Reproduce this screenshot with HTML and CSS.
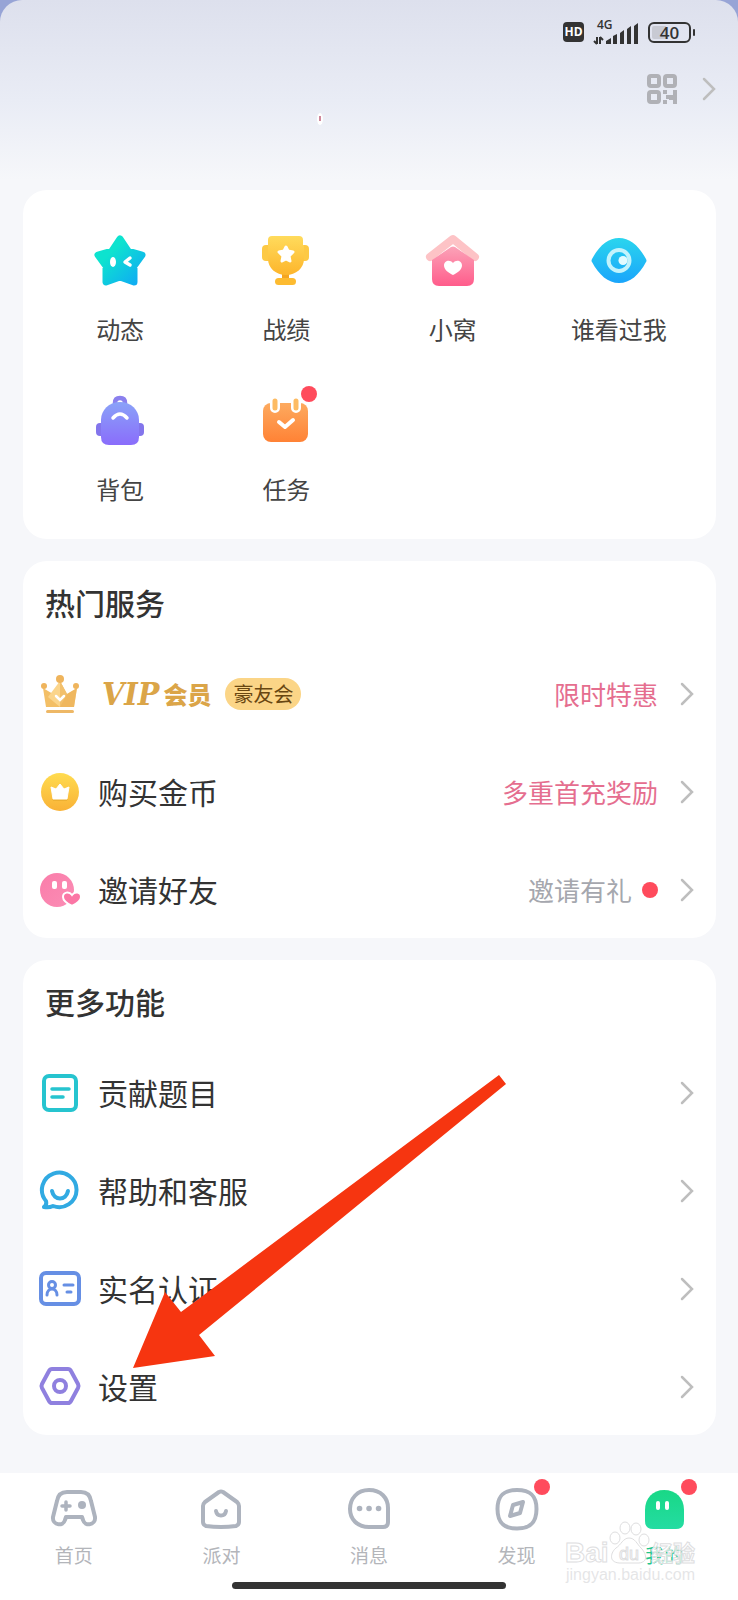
FILE: index.html
```html
<!DOCTYPE html>
<html lang="zh-CN">

<head>
    <meta charset="UTF-8">
    <meta name="viewport" content="width=device-width, initial-scale=1.0">
    <title>我的</title>
    <link rel="stylesheet" href="styles.css">
</head>

<body>
    <div class="page">
        <header class="top">
            <div class="status-bar">
                <span class="hd">HD</span>
                <svg class="signal" width="46" height="36" viewBox="0 -5 46 36">
                    <text class="signal-text" x="5" y="10">4G</text>
                    <path d="M5 18v7M5 25l-3-3M8 25v-7M8 18l3 3" fill="none" stroke="#333" stroke-width="2" />
                    <path d="M14 25v-3l5-3v6zM21 25v-8l4-2v10zM28 25V14l4-3v14zM35 25V10l4-3v18zM42 25V7l4-3v21z" fill="#333" />
                </svg>
                <span class="battery">40</span>
            </div>
            <div class="profile">
                <svg class="mark" width="10" height="14" viewBox="0 0 10 14">
                    <ellipse cx="6" cy="7" rx="3" ry="6" fill="#fff" />
                    <path d="M6 4v5" stroke="#c0607a" stroke-width="1.500" />
                </svg>
                <button type="button" class="qr-button" aria-label="二维码">
                    <svg width="32" height="32" viewBox="0 0 32 32" fill="none" stroke="#b0b1b6" stroke-width="4">
                        <rect x="3" y="3" width="10" height="10" rx="2" />
                        <rect x="19" y="3" width="10" height="10" rx="2" />
                        <rect x="3" y="19" width="10" height="10" rx="2" />
                        <path d="M17 19h4M20 24h8M17 29h4M29 17v14M25 22v5" />
                    </svg>
                </button>
                <a href="#profile" aria-label="个人主页">
                    <svg class="chevron" width="14" height="24" viewBox="0 0 14 24"><path d="M2 2l10 10L2 22" /></svg>
                </a>
            </div>
        </header>

        <main>
            <section class="card grid">
                <a class="tile" href="#moments">
                    <svg width="56" height="56" viewBox="0 0 56 56">
                        <defs>
                            <linearGradient id="star" x1="0" y1="0" x2="1" y2="1">
                                <stop offset="0.3" stop-color="#0de3cf" />
                                <stop offset="1" stop-color="#0fa9f5" />
                            </linearGradient>
                        </defs>
                        <path d="M28 6L36 18L50 22L42 33L42 49L28 44L14 49L14 33L6 22L20 18z" fill="url(#star)" stroke="url(#star)" stroke-width="7" stroke-linejoin="round" />
                        <ellipse cx="21" cy="29" rx="3" ry="5" fill="#fff" />
                        <path d="M38 25l-5 4 5 3" fill="none" stroke="#fff" stroke-width="3.500" stroke-linecap="round" stroke-linejoin="round" />
                    </svg>
                    <span>动态</span>
                </a>
                <a class="tile" href="#records">
                    <svg width="56" height="56" viewBox="0 0 56 56">
                        <defs>
                            <linearGradient id="cup" x1="0" y1="0" x2="0" y2="1">
                                <stop offset="0" stop-color="#ffdb5c" />
                                <stop offset="1" stop-color="#fdb52b" />
                            </linearGradient>
                        </defs>
                        <rect x="4" y="12" width="47" height="16" rx="4" fill="#fdc944" />
                        <rect x="24" y="39" width="7" height="8" fill="#f5a51f" />
                        <path d="M14 3h27q4 0 4 4v5h1v14c0 9-8 16-18 16S10 35 10 26V7q0-4 4-4z" fill="url(#cup)" />
                        <rect x="17" y="45" width="21" height="7" rx="3.500" fill="#fdbb30" />
                        <path d="M28 14l2 4 5 1-4 4 1 5-4-2-4 2 1-5-4-4 5-1z" fill="#fff" stroke="#fff" stroke-width="3" stroke-linejoin="round" />
                    </svg>
                    <span>战绩</span>
                </a>
                <a class="tile" href="#nest">
                    <svg width="56" height="56" viewBox="0 0 56 56">
                        <defs>
                            <linearGradient id="house" x1="0" y1="0" x2="0" y2="1">
                                <stop offset="0" stop-color="#fba3b8" />
                                <stop offset="1" stop-color="#ff5c8b" />
                            </linearGradient>
                        </defs>
                        <path d="M5 24L28 6L50 24" fill="none" stroke="#fdc3c6" stroke-width="8" stroke-linecap="round" stroke-linejoin="round" />
                        <path d="M26 14q2-1 4 0l19 13v19q0 7-7 7H14q-7 0-7-7V27z" fill="url(#house)" />
                        <path d="M28 42c-4-2-9-5-9-9.500 0-5 6-6.500 9-2.500 3-4 9-2.500 9 2.500 0 4.500-5 7.500-9 9.500z" fill="#fff" />
                    </svg>
                    <span>小窝</span>
                </a>
                <a class="tile" href="#visitors">
                    <svg width="56" height="56" viewBox="0 0 56 56">
                        <defs>
                            <linearGradient id="eye" x1="0" y1="0" x2="0" y2="1">
                                <stop offset="0" stop-color="#2ad5ee" />
                                <stop offset="1" stop-color="#1aa5fb" />
                            </linearGradient>
                        </defs>
                        <path d="M1 26C8 13 17 5 28 5s20 8 27 21q1 2 0 3C48 42 39 50 28 50S8 42 1 29q-1-1 0-3z" fill="url(#eye)" />
                        <circle cx="28" cy="27.500" r="10.500" fill="none" stroke="#c2f3fc" stroke-width="4" />
                        <circle cx="32" cy="27.500" r="4.500" fill="#e2fbff" />
                    </svg>
                    <span>谁看过我</span>
                </a>
                <a class="tile" href="#bag">
                    <svg width="56" height="56" viewBox="0 0 56 56">
                        <defs>
                            <linearGradient id="bag" x1="0" y1="0" x2="0" y2="1">
                                <stop offset="0" stop-color="#8aa2f8" />
                                <stop offset="1" stop-color="#8a6dfb" />
                            </linearGradient>
                        </defs>
                        <rect x="4" y="30" width="48" height="13" rx="4" fill="#8375ec" />
                        <path d="M23 13v-3q0-5 5-5t5 5v3" fill="none" stroke="#8b80ee" stroke-width="4.500" />
                        <path d="M28 9c11 0 19 8 19 18v17q0 8-8 8H17q-8 0-8-8V27C9 17 17 9 28 9z" fill="url(#bag)" />
                        <path d="M21 25q7-8 14 0" fill="none" stroke="#fff" stroke-width="3.500" stroke-linecap="round" />
                    </svg>
                    <span>背包</span>
                </a>
                <a class="tile" href="#tasks">
                    <span class="icon-wrap">
                        <svg width="56" height="56" viewBox="0 0 56 56">
                            <defs>
                                <linearGradient id="task" x1="0" y1="0" x2="0" y2="1">
                                    <stop offset="0" stop-color="#fdaa5f" />
                                    <stop offset="1" stop-color="#ff8235" />
                                </linearGradient>
                            </defs>
                            <rect x="5" y="10" width="45" height="39" rx="8" fill="url(#task)" />
                            <path d="M17 8v7M38 8v7" stroke="#fff" stroke-width="10" stroke-linecap="round" />
                            <path d="M17 8v7M38 8v7" stroke="#fdbb62" stroke-width="5" stroke-linecap="round" />
                            <path d="M21 29l6 5 8-7" fill="none" stroke="#fff" stroke-width="4" stroke-linecap="round" stroke-linejoin="round" />
                        </svg>
                        <i class="dot badge"></i>
                    </span>
                    <span>任务</span>
                </a>
            </section>

            <section class="card">
                <h2>热门服务</h2>
                <div class="rows">
                    <a class="row" href="#vip">
                        <svg width="44" height="44" viewBox="0 0 44 44">
                            <path d="M5 16l10 6 7-13 7 13 10-6-3 19H8z" fill="#f3bf66" />
                            <path d="M22 9l7 13-7 13-12-10z" fill="#fbd58b" />
                            <path d="M22 9l7 13 10-6-3 19H22z" fill="#edb35a" opacity="0.6" />
                            <circle cx="22" cy="7" r="4" fill="#efb45c" />
                            <circle cx="6" cy="14" r="3" fill="#efb45c" />
                            <circle cx="38" cy="14" r="3" fill="#efb45c" />
                            <rect x="8" y="38" width="28" height="3" rx="1.500" fill="#eeb866" />
                            <path d="M18 24l4 4 4-4" fill="none" stroke="#fff" stroke-width="2.500" stroke-linecap="round" />
                        </svg>
                        <span class="vip"><em>VIP</em>会员</span>
                        <span class="tag">豪友会</span>
                        <span class="value pink">限时特惠</span>
                        <svg class="chevron" width="14" height="24" viewBox="0 0 14 24"><path d="M2 2l10 10L2 22" /></svg>
                    </a>
                    <a class="row" href="#coins">
                        <svg width="44" height="44" viewBox="0 0 44 44">
                            <defs>
                                <linearGradient id="coin" x1="0" y1="0" x2="0" y2="1">
                                    <stop offset="0" stop-color="#ffdb4f" />
                                    <stop offset="1" stop-color="#f9b236" />
                                </linearGradient>
                            </defs>
                            <circle cx="22" cy="22" r="19" fill="url(#coin)" />
                            <path d="M13 19l5 2 4-5 4 5 5-2-2 12H15z" fill="#d99a20" opacity="0.4" />
                            <path d="M13 17l5 2 4-5 4 5 5-2-2 12H15z" fill="#fff" stroke="#fff" stroke-linejoin="round" />
                        </svg>
                        <span class="name">购买金币</span>
                        <span class="value pink">多重首充奖励</span>
                        <svg class="chevron" width="14" height="24" viewBox="0 0 14 24"><path d="M2 2l10 10L2 22" /></svg>
                    </a>
                    <a class="row" href="#invite">
                        <svg width="44" height="44" viewBox="0 0 44 44">
                            <defs>
                                <linearGradient id="face" x1="0" y1="0" x2="1" y2="1">
                                    <stop offset="0" stop-color="#fa7daa" />
                                    <stop offset="1" stop-color="#fb8db5" />
                                </linearGradient>
                            </defs>
                            <circle cx="19" cy="22" r="17" fill="url(#face)" />
                            <rect x="14" y="13" width="5" height="8" rx="2" fill="#fff" />
                            <rect x="24" y="13" width="5" height="8" rx="2" fill="#fff" />
                            <path d="M34 38c-4-2-9-5-9-9 0-5 6-6 9-2 3-4 9-3 9 2 0 4-5 7-9 9z" fill="#fb76a5" stroke="#fff" stroke-width="2" />
                        </svg>
                        <span class="name">邀请好友</span>
                        <span class="value">邀请有礼<i class="dot"></i></span>
                        <svg class="chevron" width="14" height="24" viewBox="0 0 14 24"><path d="M2 2l10 10L2 22" /></svg>
                    </a>
                </div>
            </section>

            <section class="card">
                <h2>更多功能</h2>
                <div class="rows">
                    <a class="row" href="#contribute">
                        <svg class="line-icon" width="44" height="44" viewBox="0 0 44 44" stroke="#26c4cf">
                            <rect x="6" y="5" width="32" height="34" rx="5" />
                            <path d="M14 18h17M14 26h11" stroke-width="3.500" />
                        </svg>
                        <span class="name">贡献题目</span>
                        <svg class="chevron" width="14" height="24" viewBox="0 0 14 24"><path d="M2 2l10 10L2 22" /></svg>
                    </a>
                    <a class="row" href="#help">
                        <svg class="line-icon" width="44" height="44" viewBox="0 0 44 44" stroke="#31aae2">
                            <path d="M8 32A17.300 17.300 0 1 1 15 37Q11 39 6 38q3-2 2-6z" />
                            <path d="M14 22c2 10 14 10 16 0" />
                        </svg>
                        <span class="name">帮助和客服</span>
                        <svg class="chevron" width="14" height="24" viewBox="0 0 14 24"><path d="M2 2l10 10L2 22" /></svg>
                    </a>
                    <a class="row" href="#verify">
                        <svg class="line-icon" width="44" height="44" viewBox="0 0 44 44" stroke="#668fe4">
                            <rect x="3" y="6" width="38" height="31" rx="5" />
                            <g stroke-width="3">
                                <circle cx="14" cy="18" r="3.500" />
                                <path d="M9 28c0-8 10-8 10 0M26 18h9M29 25h4" />
                            </g>
                        </svg>
                        <span class="name">实名认证</span>
                        <svg class="chevron" width="14" height="24" viewBox="0 0 14 24"><path d="M2 2l10 10L2 22" /></svg>
                    </a>
                    <a class="row" href="#settings">
                        <svg class="line-icon" width="44" height="44" viewBox="0 0 44 44" stroke="#8f80df">
                            <path d="M14 4h16q2 0 3 2l7 13q1 2 0 4l-7 13q-1 2-3 2H14q-2 0-3-2L4 23q-1-2 0-4l7-13q1-2 3-2z" />
                            <circle cx="22" cy="21" r="6" />
                        </svg>
                        <span class="name">设置</span>
                        <svg class="chevron" width="14" height="24" viewBox="0 0 14 24"><path d="M2 2l10 10L2 22" /></svg>
                    </a>
                </div>
                <!-- pointer to the settings row -->
                <svg class="arrow" width="374" height="294" viewBox="0 0 374 294">
                    <path d="M0 294L32 218L48 238L366 1L373 10L66 261L82 282z" fill="#f63510" />
                </svg>
            </section>
        </main>

        <footer class="tabbar">
            <nav class="tabs">
                <a class="tab" href="#home">
                    <svg class="line-icon" width="48" height="48" viewBox="0 0 48 48" stroke="#adb3be">
                        <path d="M17 6h14c6 0 9 3 10 9l4 16c1 8-10 10-12 3l-1-3H16l-1 3c-2 7-13 5-12-3L7 15c1-6 4-9 10-9z" />
                        <path d="M16 16v8M12 20h8" stroke-width="3.500" />
                        <circle cx="32" cy="19" r="4" fill="#adb3be" stroke="none" />
                    </svg>
                    <span>首页</span>
                </a>
                <a class="tab" href="#party">
                    <svg class="line-icon" width="48" height="48" viewBox="0 0 48 48" stroke="#adb3be">
                        <path d="M22 6q2-1 4 0l14 10q2 2 2 4v16q0 3-3 4-15 2-30 0-3-1-3-4V20q0-2 2-4z" />
                        <path d="M19 25c1 6 9 6 10 0" />
                    </svg>
                    <span>派对</span>
                </a>
                <a class="tab" href="#messages">
                    <svg class="line-icon" width="48" height="48" viewBox="0 0 48 48" stroke="#adb3be">
                        <path d="M24 4c12 0 19 8 19 18v14q0 5-5 5H24C12 41 5 33 5 23S12 4 24 4z" />
                        <path d="M14.500 22.500h.1M24 22.500h.1M33.500 22.500h.1" stroke-width="5.500" />
                    </svg>
                    <span>消息</span>
                </a>
                <a class="tab" href="#discover">
                    <span class="icon-wrap">
                        <svg class="line-icon" width="48" height="48" viewBox="0 0 48 48" stroke="#adb3be">
                            <path d="M24 4c14 0 19.500 6 19.500 19S38 42.500 24 42.500 4.500 36 4.500 23 10 4 24 4z" />
                            <path d="M20 19l10-3-3 11-10 3z" />
                        </svg>
                        <i class="dot badge"></i>
                    </span>
                    <span>发现</span>
                </a>
                <a class="tab active" href="#me">
                    <span class="icon-wrap">
                        <svg width="48" height="48" viewBox="0 0 48 48">
                            <defs>
                                <linearGradient id="me" x1="0" y1="0" x2="0" y2="1">
                                    <stop offset="0" stop-color="#19d886" />
                                    <stop offset="1" stop-color="#24dca2" />
                                </linearGradient>
                            </defs>
                            <path d="M24 4c12 0 20 8 20 20v11q0 8-8 8H13q-8 0-8-8V24C5 12 13 4 24 4z" fill="url(#me)" />
                            <rect x="16" y="15" width="4" height="9" rx="2" fill="#fff" />
                            <rect x="25" y="15" width="4" height="9" rx="2" fill="#fff" />
                        </svg>
                        <i class="dot badge"></i>
                    </span>
                    <span>我的</span>
                </a>
            </nav>
            <div class="home-bar"></div>
            <svg class="watermark" width="136" height="68" viewBox="0 0 136 68">
                <ellipse cx="51" cy="19" rx="5" ry="6" />
                <ellipse cx="61" cy="9" rx="5" ry="6" />
                <ellipse cx="72" cy="10" rx="5" ry="6" />
                <ellipse cx="80" cy="21" rx="5" ry="6" />
                <path d="M65 19c6 0 8 6 12 10 5 5 8 14-2 15H55c-11-1-8-11-3-15 5-3 7-10 13-10z" />
                <text x="1" y="43" font-size="28" font-weight="bold">Bai</text>
                <text x="55" y="41" font-size="18">du</text>
                <text x="87" y="42" font-size="22" font-weight="bold">经验</text>
                <text class="watermark-url" x="2" y="61" font-size="16">jingyan.baidu.com</text>
            </svg>
        </footer>
    </div>
</body>

</html>
```

FILE: styles.css
```css
* {
    box-sizing: border-box;
}

body {
    margin: 0;
    font-family: "Noto Sans CJK SC", sans-serif;
    color: #333;
    background-color: #97a4d6;
}

a {
    color: inherit;
    text-decoration: none;
}

svg {
    display: block;
    flex-shrink: 0;
}

.page {
    display: flex;
    flex-direction: column;
    min-height: 100vh;
    border-radius: 22px 22px 0 0;
    background: #f6f7fa linear-gradient(#dde0ed, #e9ecf5 100px, #f6f7fa 180px) no-repeat;
}

/* top area */
.top {
    height: 190px;
    padding: 18px 22px 0;
}

.status-bar {
    display: flex;
    justify-content: flex-end;
    align-items: center;
    height: 28px;
    padding-right: 25px;
    font-family: "Open Sans", sans-serif;
}

.hd {
    width: 21px;
    height: 20px;
    margin-right: 8px;
    border-radius: 4px;
    background-color: #333;
    color: #fff;
    font-size: 12px;
    font-weight: bold;
    line-height: 20px;
    text-align: center;
}

.signal {
    margin-right: 10px;
}

.signal-text {
    font-size: 12px;
    font-weight: 600;
    fill: #333;
}

.battery {
    position: relative;
    width: 43px;
    height: 21px;
    border: 2px solid #333;
    border-radius: 6px;
    background: linear-gradient(90deg, #c8cad3 40%, transparent 40%) content-box;
    padding: 2px;
    font-size: 17px;
    font-weight: 600;
    line-height: 14px;
    text-align: center;
}

.battery::after {
    content: "";
    position: absolute;
    right: -6px;
    top: 5px;
    width: 2px;
    height: 7px;
    border-radius: 1px;
    background-color: #333;
}

.profile {
    position: relative;
    display: flex;
    justify-content: flex-end;
    align-items: center;
    gap: 24px;
    height: 32px;
    margin-top: 27px;
}

.mark {
    position: absolute;
    left: 292px;
    top: 39px;
}

.qr-button {
    padding: 0;
    border: none;
    background: none;
    cursor: pointer;
}

.chevron {
    fill: none;
    stroke: #bebebe;
    stroke-width: 2.5;
    stroke-linecap: round;
}

/* cards */
main {
    flex: 1;
    display: flex;
    flex-direction: column;
    gap: 22px;
    padding: 0 22px 38px 23px;
}

.card {
    position: relative;
    padding: 19px 22px 25px 15px;
    border-radius: 24px;
    background-color: #fff;
}

.grid {
    display: grid;
    grid-template-columns: repeat(4, 1fr);
    row-gap: 48px;
    padding: 43px 14px 34px;
}

.tile {
    display: flex;
    flex-direction: column;
    align-items: center;
    gap: 24px;
    color: #444;
    font-size: 24px;
    line-height: 32px;
}

.icon-wrap {
    position: relative;
}

.dot {
    width: 16px;
    height: 16px;
    border-radius: 50%;
    background-color: #ff4b5c;
}

.badge {
    position: absolute;
    right: -9px;
    top: -7px;
}

.tile .badge {
    right: -3px;
}

h2 {
    margin: 0 0 47px 7px;
    font-size: 30px;
    font-weight: 500;
    line-height: 44px;
}

.rows {
    display: flex;
    flex-direction: column;
    gap: 52px;
}

.row {
    display: flex;
    align-items: center;
    height: 46px;
}

.name {
    margin-left: 16px;
    padding-bottom: 2px;
    font-size: 30px;
    line-height: 44px;
}

.vip {
    display: flex;
    align-items: center;
    gap: 4px;
    margin-left: 20px;
    color: #dba548;
    font-size: 24px;
    font-weight: 900;
    line-height: 32px;
}

.vip em {
    font-family: "DejaVu Serif Condensed", "DejaVu Serif", serif;
    font-size: 32px;
    font-weight: bold;
}

.tag {
    margin-left: 14px;
    padding: 0 8px;
    border-radius: 16px;
    background-color: #fbd587;
    color: #694711;
    font-size: 20px;
    line-height: 32px;
}

.value {
    display: flex;
    align-items: center;
    gap: 10px;
    margin-left: auto;
    margin-right: 22px;
    color: #a5a7ae;
    font-size: 26px;
    line-height: 40px;
}

.pink {
    color: #e56e8f;
}

.row .chevron {
    margin-left: auto;
}

.value + .chevron {
    margin-left: 0;
}

.line-icon {
    fill: none;
    stroke-width: 4;
    stroke-linecap: round;
    stroke-linejoin: round;
}

.arrow {
    position: absolute;
    left: 110px;
    top: 114px;
    pointer-events: none;
}

/* bottom navigation */
.tabbar {
    position: relative;
    padding: 13px 0 12px;
    background-color: #fff;
}

.tabs {
    display: grid;
    grid-template-columns: repeat(5, 1fr);
}

.tab {
    display: flex;
    flex-direction: column;
    align-items: center;
    gap: 7px;
    color: #b3b5ba;
    font-size: 19px;
    line-height: 28px;
}

.active {
    color: #22c58b;
}

.home-bar {
    width: 37%;
    height: 7px;
    margin: 13px auto 0;
    border-radius: 4px;
    background-color: #333;
}

.watermark {
    position: absolute;
    right: 38px;
    bottom: 14px;
    fill: #fff;
    fill-opacity: 0.7;
    stroke: #dededf;
    font-family: "Liberation Sans", "Noto Sans CJK SC", sans-serif;
    pointer-events: none;
}

.watermark-url {
    fill: #dadadc;
    stroke: none;
}
```
